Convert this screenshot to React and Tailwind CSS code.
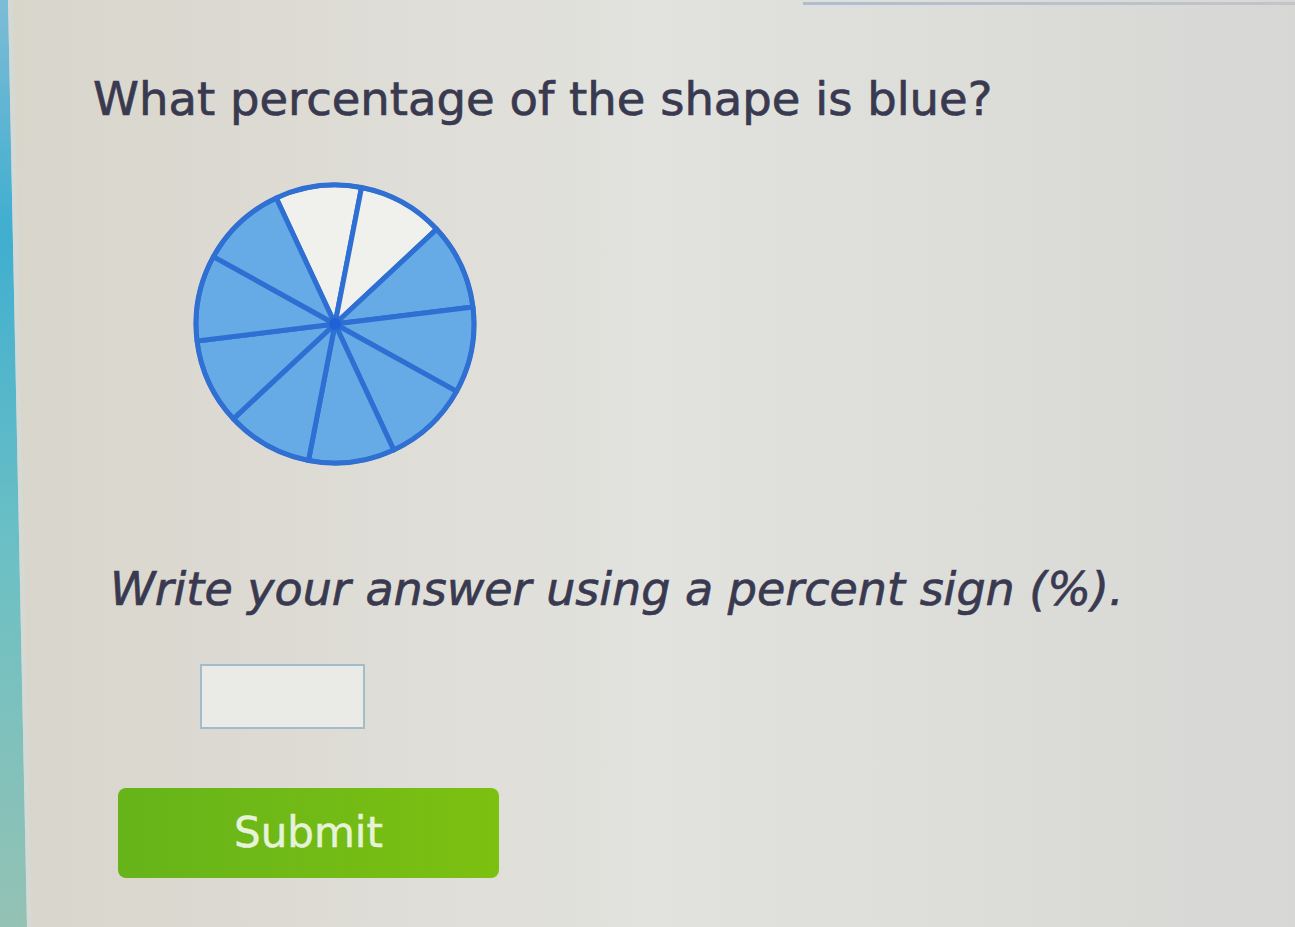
import React from "react";

const SLICES = 10;
const START = -25; // degrees, clockwise from 12 o'clock
const WHITE = [0, 1];

function pt(cx, cy, r, deg) {
  const a = (deg * Math.PI) / 180;
  return [cx + r * Math.sin(a), cy - r * Math.cos(a)];
}

function Pie() {
  const cx = 145;
  const cy = 145;
  const r = 139;
  const step = 360 / SLICES;
  const slices = [];
  for (let i = 0; i < SLICES; i++) {
    const a0 = START + i * step;
    const a1 = a0 + step;
    const [x0, y0] = pt(cx, cy, r, a0);
    const [x1, y1] = pt(cx, cy, r, a1);
    slices.push(
      <path
        key={i}
        d={`M${cx} ${cy} L${x0.toFixed(2)} ${y0.toFixed(2)} A${r} ${r} 0 0 1 ${x1.toFixed(2)} ${y1.toFixed(2)} Z`}
        fill={WHITE.includes(i) ? "#f0f0ed" : "#66aae6"}
        stroke="#2e6fd4"
        strokeWidth="5"
        strokeLinejoin="round"
      />
    );
  }
  return (
    <svg width="290" height="290" viewBox="0 0 290 290">
      {slices}
      <circle cx={cx} cy={cy} r={r} fill="none" stroke="#3070d2" strokeWidth="4.5" />
      <circle cx={cx} cy={cy} r="6" fill="#1f62d8" />
    </svg>
  );
}

export default function App() {
  return (
    <div
      className="relative flex w-[1295px] h-[927px] overflow-hidden bg-gradient-to-r from-[#d8d5cb] via-[#e2e2de] to-[#d7d7d5]"
      style={{ fontFamily: '"DejaVu Sans", Verdana, sans-serif' }}
    >
      {/* left edge of the screen frame */}
      <div className="absolute left-0 top-0 h-full w-[34px]">
        <svg width="34" height="927" viewBox="0 0 34 927" preserveAspectRatio="none">
          <defs>
            <linearGradient id="edge" x1="0" y1="0" x2="0" y2="1">
              <stop offset="0" stopColor="#7dbcd6" />
              <stop offset="0.25" stopColor="#40aed0" />
              <stop offset="0.6" stopColor="#6cc0c4" />
              <stop offset="1" stopColor="#94c2b4" />
            </linearGradient>
          </defs>
          <polygon points="0,0 8,0 27,927 0,927" fill="url(#edge)" />
          <polygon points="8,0 13,0 32,927 27,927" fill="#d4dad6" opacity="0.8" />
        </svg>
      </div>

      {/* top edge line */}
      <div className="absolute right-0 top-[2px] h-[3px] w-[492px] bg-gradient-to-r from-[#aebdd0] to-[#c4c4c8]" />

      <div className="flex flex-col text-[#393950]">
        <h1 className="ml-[93px] mt-[76px] text-[46.5px] leading-none font-normal [-webkit-text-stroke:0.7px_#393950] whitespace-nowrap">
          What percentage of the shape is blue?
        </h1>

        <div className="ml-[190px] mt-[56px]">
          <Pie />
        </div>

        <p className="ml-[110px] mt-[97px] text-[46px] leading-none italic [-webkit-text-stroke:0.7px_#393950] whitespace-nowrap">
          Write your answer using a percent sign (%).
        </p>

        <input
          type="text"
          className="ml-[200px] mt-[52px] w-[165px] h-[65px] border-2 border-[#a2bccc] bg-[#eaeae7] outline-none"
        />

        <button className="ml-[118px] mt-[59px] w-[381px] h-[90px] rounded-[8px] bg-gradient-to-r from-[#66b41a] to-[#7cc010] text-[42px] leading-none text-[#e6f3d8] [-webkit-text-stroke:0.5px_#e6f3d8]">
          Submit
        </button>
      </div>
    </div>
  );
}
